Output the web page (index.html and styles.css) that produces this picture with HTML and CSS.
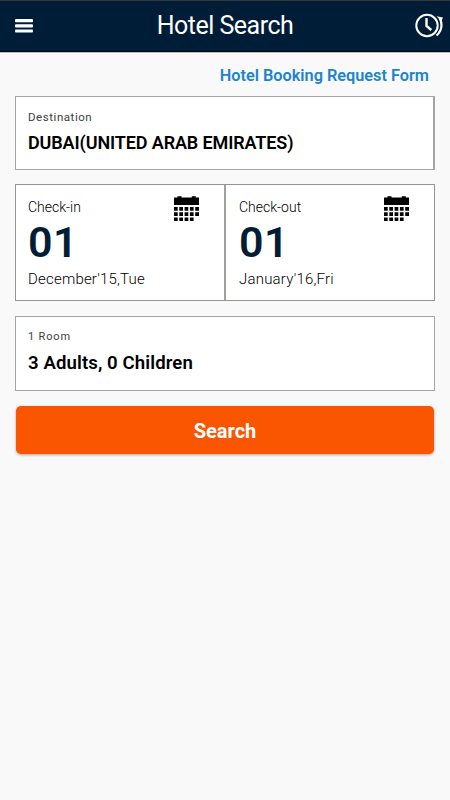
FILE: index.html
```html
<!DOCTYPE html>
<html lang="en">
<head>
<meta charset="utf-8">
<title>Hotel Search</title>
<link rel="stylesheet" href="styles.css">
</head>
<body>
<svg width="0" height="0" class="defs">
  <symbol id="calendar" viewBox="0 0 26 26">
    <path d="M0 1.500h3.500V.3h4v1.200h10.300V.3h4v1.200H25V9H0z"/>
    <path d="M0 11h3.7v3.700H0zM5.3 11H9v3.700H5.300zM10.600 11h3.700v3.700h-3.700zM15.900 11h3.700v3.700h-3.700zM21.200 11h3.800v3.700h-3.800zM0 16.300h3.700V20H0zM5.300 16.300H9V20H5.300zM10.600 16.300h3.700V20h-3.700zM15.900 16.300h3.700V20h-3.700zM21.200 16.300h3.800V20h-3.800zM0 21.600h3.700V25H0zM5.300 21.600H9V25H5.300zM10.600 21.600h3.700V25h-3.700zM15.900 21.600h3.700V25h-3.700z"/>
  </symbol>
</svg>
<header class="bar">
  <svg class="menu" width="18" height="15" viewBox="0 0 18 15" fill="#fff"><rect width="18" height="3.2" rx="1"/><rect y="5.200" width="18" height="3.2" rx="1"/><rect y="10.400" width="18" height="3.2" rx="1"/></svg>
  <h1 class="title">Hotel Search</h1>
  <svg class="history" width="30" height="26" viewBox="0 0 30 26" fill="none" stroke="#fff">
    <circle cx="12" cy="12.500" r="10.700" stroke-width="2"/>
    <path d="M11.500 5v8l4.800 4" stroke-width="2.400"/>
    <path d="M25 5.500c2.500 6 1.500 12.500-3.500 17" stroke-width="2.200"/>
    <path d="M21.500 3.200l6.500 1.200-1.800 3.800z" fill="#fff" stroke="none"/>
  </svg>
</header>
<main class="content">
  <a class="request">Hotel Booking Request Form</a>
  <section class="card destination">
    <div class="label">Destination</div>
    <div class="value dest-value">DUBAI(UNITED ARAB EMIRATES)</div>
  </section>
  <section class="dates">
    <div class="date">
      <div class="check">Check-in</div>
      <div class="day">01</div>
      <div class="month">December'15,Tue</div>
      <svg class="cal" width="26" height="26"><use href="#calendar"/></svg>
    </div>
    <div class="date">
      <div class="check">Check-out</div>
      <div class="day">01</div>
      <div class="month">January'16,Fri</div>
      <svg class="cal" width="26" height="26"><use href="#calendar"/></svg>
    </div>
  </section>
  <section class="card room">
    <div class="label room-label">1 Room</div>
    <div class="value room-value">3 Adults, 0 Children</div>
  </section>
  <button class="search">Search</button>
</main>
</body>
</html>
```
FILE: styles.css
```css
* { box-sizing: border-box; }
body {
  margin: 0;
  min-height: 800px;
  background: #f9f9f9;
  font-family: Roboto, sans-serif;
  color: #000;
}
.defs { display: block; }
.bar {
  height: 52px;
  padding: 0 5px 0 15px;
  display: grid;
  grid-template-columns: 30px 1fr 30px;
  align-items: center;
  background: #001d37;
  border-top: 1px solid #373737;
  border-bottom: 1px solid #000714;
  box-shadow: 0 1px #c5bcb8;
}
.menu { margin-top: 0; }
.title {
  margin: 0 10px 0 0;
  text-align: center;
  font-size: 25px;
  line-height: 30px;
  font-weight: 400;
  letter-spacing: -.5px;
  color: #fff;
}
.content {
  display: flex;
  flex-direction: column;
  padding: 0 15px;
}
.request {
  align-self: flex-end;
  height: 44px;
  padding: 14px 6px 0 0;
  font-size: 16.3px;
  line-height: 20px;
  font-weight: 600;
  color: #1c84cc;
}
.card {
  padding: 13px 12px 0;
  background: #fff;
  border: 1px solid #a5a5a5;
}
.destination { height: 74px; border-right-width: 2px; }
.label {
  font-size: 11.5px;
  line-height: 15px;
  letter-spacing: .55px;
  color: #3d3d3d;
}
.value {
  margin-top: 7px;
  font-size: 18px;
  line-height: 22px;
  font-weight: 600;
}
.dest-value { letter-spacing: -.12px; }
.dates {
  margin-top: 14px;
  height: 117px;
  display: grid;
  grid-template-columns: 210px 208px;
  background: #fff;
  border: 1px solid #96968f;
}
.date {
  position: relative;
  padding: 13px 12px 0;
}
.date + .date { padding-left: 13px; }
.date:first-child { border-right: 2px solid #a0a09c; }
.check {
  font-size: 14px;
  line-height: 18px;
  font-weight: 300;
  color: #000;
}
.day {
  margin-top: 1px;
  font-size: 43px;
  line-height: 50px;
  font-weight: 600;
  letter-spacing: .5px;
  color: #001d37;
}
.month {
  margin-top: 3px;
  font-size: 15px;
  line-height: 18px;
  font-weight: 300;
  letter-spacing: .2px;
  color: #000;
}
.cal { position: absolute; top: 11px; left: 158px; }
.room { height: 75px; margin-top: 15px; padding-top: 12px; }
.room-label { font-size: 11px; letter-spacing: .85px; }
.room-value { margin-top: 8px; font-size: 18.6px; letter-spacing: .1px; }
.search {
  margin: 15px 1px 0;
  height: 48px;
  padding: 2px 0 0;
  border: 0;
  border-radius: 5px;
  background: #fa5500;
  box-shadow: 0 1px 3px rgba(0, 0, 0, .35);
  font: 700 20px/46px Roboto, sans-serif;
  color: #fff;
}
```
